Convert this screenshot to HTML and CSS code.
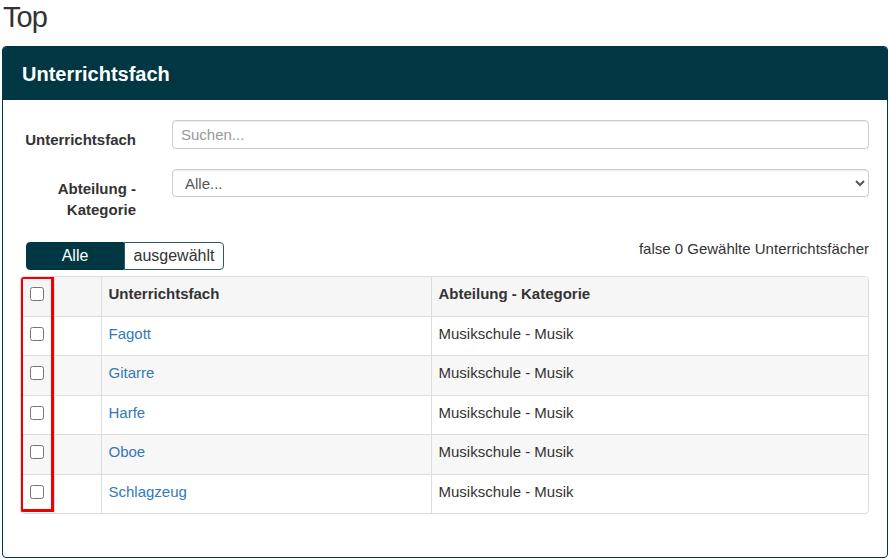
FILE: index.html
```html
<!DOCTYPE html>
<html lang="de">

<head>
    <meta charset="UTF-8">
    <title>Top</title>
    <link rel="stylesheet" href="styles.css">
</head>

<body>

    <h1 class="page-title">Top</h1>

    <div class="panel">
        <div class="panel-heading">Unterrichtsfach</div>
        <div class="panel-body">

            <div class="form-row">
                <label class="form-label" for="search">Unterrichtsfach</label>
                <input class="form-control" id="search" type="text" placeholder="Suchen...">
            </div>

            <div class="form-row">
                <label class="form-label" for="abteilung">Abteilung - Kategorie</label>
                <select class="form-control form-select" id="abteilung">
                    <option>Alle...</option>
                </select>
            </div>

            <div class="toolbar">
                <div class="toggle">
                    <button class="toggle-btn active">Alle</button>
                    <button class="toggle-btn">ausgewählt</button>
                </div>
                <div class="selection-info">false 0 Gewählte Unterrichtsfächer</div>
            </div>

            <div class="table-wrap">
                <table class="data-table">
                    <colgroup>
                        <col class="col-check">
                        <col class="col-empty">
                        <col class="col-name">
                        <col>
                    </colgroup>
                    <thead>
                        <tr>
                            <th class="cell-check"><input type="checkbox"></th>
                            <th></th>
                            <th>Unterrichtsfach</th>
                            <th>Abteilung - Kategorie</th>
                        </tr>
                    </thead>
                    <tbody>
                        <tr>
                            <td class="cell-check"><input type="checkbox"></td>
                            <td></td>
                            <td><a href="#">Fagott</a></td>
                            <td>Musikschule - Musik</td>
                        </tr>
                        <tr>
                            <td class="cell-check"><input type="checkbox"></td>
                            <td></td>
                            <td><a href="#">Gitarre</a></td>
                            <td>Musikschule - Musik</td>
                        </tr>
                        <tr>
                            <td class="cell-check"><input type="checkbox"></td>
                            <td></td>
                            <td><a href="#">Harfe</a></td>
                            <td>Musikschule - Musik</td>
                        </tr>
                        <tr>
                            <td class="cell-check"><input type="checkbox"></td>
                            <td></td>
                            <td><a href="#">Oboe</a></td>
                            <td>Musikschule - Musik</td>
                        </tr>
                        <tr>
                            <td class="cell-check"><input type="checkbox"></td>
                            <td></td>
                            <td><a href="#">Schlagzeug</a></td>
                            <td>Musikschule - Musik</td>
                        </tr>
                    </tbody>
                </table>
                <div class="highlight"></div>
            </div>

        </div>
    </div>

</body>

</html>
```

FILE: styles.css
```css
body {
    margin: 0;
    font-family: 'Liberation Sans', Arial, sans-serif;
    font-size: 15px;
    line-height: 21px;
    color: #333;
    background: #fff;
}

.page-title {
    margin: 0 0 11px 3px;
    font-size: 29px;
    font-weight: normal;
    line-height: 35px;
    letter-spacing: -1px;
    color: #333;
}

.panel {
    margin: 0 1px 0 2px;
    border: 1px solid #003743;
    border-radius: 4px;
    overflow: hidden;
}

.panel-heading {
    background: #003743;
    color: #fff;
    font-size: 20px;
    font-weight: bold;
    line-height: 23px;
    padding: 16px 19px 14px;
}

.panel-body {
    padding: 20px 18px 20px 17px;
}

.form-row {
    display: grid;
    grid-template-columns: 116px 1fr;
    column-gap: 36px;
    align-items: start;
    margin-bottom: 19px;
}

.form-label {
    padding-top: 9px;
    text-align: right;
    font-weight: bold;
}

.form-control {
    box-sizing: border-box;
    width: 100%;
    height: 29px;
    padding: 0 8px;
    font-family: inherit;
    font-size: 15px;
    color: #555;
    background: #fff;
    border: 1px solid #ccc;
    border-radius: 4px;
    box-shadow: inset 0 1px 1px rgba(0, 0, 0, 0.075);
}

.form-control::placeholder {
    color: #999;
}

.form-select {
    height: 28px;
}

.toolbar {
    display: flex;
    justify-content: space-between;
    align-items: flex-start;
}

.selection-info {
    margin-top: -1px;
}

.toggle {
    display: flex;
    margin: 3px 0 0 6px;
}

.toggle-btn {
    box-sizing: border-box;
    height: 28px;
    padding: 0;
    font-family: inherit;
    font-size: 16px;
    border: 1px solid #003743;
    background: #fff;
    color: #333;
    cursor: pointer;
}

.toggle-btn.active {
    width: 98px;
    background: #003743;
    color: #fff;
    border-radius: 4px 0 0 4px;
}

.toggle-btn:not(.active) {
    width: 100px;
    border-color: #2f5a63;
    border-radius: 0 4px 4px 0;
}

.table-wrap {
    position: relative;
    margin: 6px 0 23px;
    border: 1px solid #ddd;
    border-radius: 4px;
    overflow: hidden;
}

.data-table {
    width: 100%;
    border-collapse: collapse;
    table-layout: fixed;
}

.col-check {
    width: 33px;
}

.col-empty {
    width: 47px;
}

.col-name {
    width: 330px;
}

.data-table th,
.data-table td {
    padding: 6px 7px 11.5px;
    line-height: 21px;
    text-align: left;
    border-top: 1px solid #ddd;
    border-left: 1px solid #ddd;
}

.data-table thead th {
    border-top: none;
    background: #f6f6f6;
}

.data-table tr > :first-child {
    border-left: none;
}

.data-table tbody tr:nth-child(even) {
    background: #f7f7f7;
}

.data-table .cell-check {
    padding-left: 0;
    padding-right: 0;
    text-align: center;
}

.cell-check input {
    margin: 0;
    width: 14px;
    height: 14px;
    vertical-align: -2px;
}

.data-table a {
    color: #337ab7;
    text-decoration: none;
}

.highlight {
    position: absolute;
    left: -1px;
    top: -1px;
    width: 34px;
    height: 236px;
    box-sizing: border-box;
    border: 3px solid #ee0000;
    pointer-events: none;
}
```
